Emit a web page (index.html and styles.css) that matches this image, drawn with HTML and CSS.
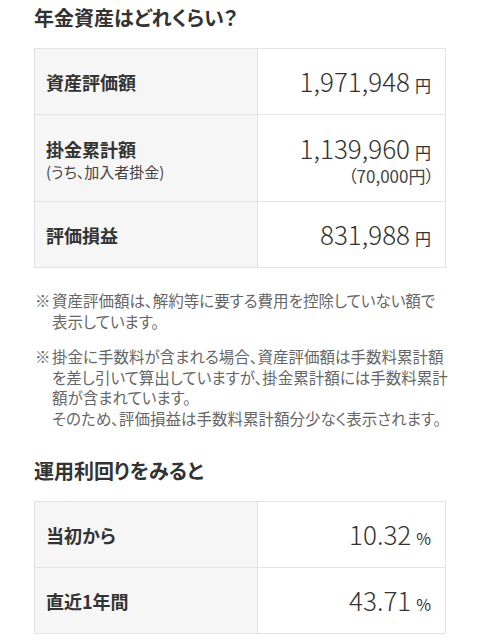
FILE: index.html
```html
<!doctype html>
<html lang="ja">
<head>
    <meta charset="UTF-8">
    <title>年金資産</title>
    <link rel="stylesheet" href="styles.css">
</head>
<body>
    <div class="page">
        <h2 class="section-title">年金資産はどれくらい？</h2>
        <div class="info-table">
            <div class="info-row">
                <div class="info-label">資産評価額</div>
                <div class="info-value">
                    <div class="amount"><span class="num">1,971,948</span><span class="unit">円</span></div>
                </div>
            </div>
            <div class="info-row info-row-tall">
                <div class="info-label">
                    掛金累計額
                    <span class="sub-label">(うち、加入者掛金)</span>
                </div>
                <div class="info-value">
                    <div class="amount"><span class="num">1,139,960</span><span class="unit">円</span></div>
                    <div class="sub-amount">（70,000円）</div>
                </div>
            </div>
            <div class="info-row">
                <div class="info-label">評価損益</div>
                <div class="info-value">
                    <div class="amount"><span class="num">831,988</span><span class="unit">円</span></div>
                </div>
            </div>
        </div>

        <ul class="notes">
            <li>資産評価額は、解約等に要する費用を控除していない額で<br>表示しています。</li>
            <li>掛金に手数料が含まれる場合、資産評価額は手数料累計額<br>を差し引いて算出していますが、掛金累計額には手数料累計<br>額が含まれています。<br>そのため、評価損益は手数料累計額分少なく表示されます。</li>
        </ul>

        <h2 class="section-title">運用利回りをみると</h2>
        <div class="info-table">
            <div class="info-row">
                <div class="info-label">当初から</div>
                <div class="info-value">
                    <div class="amount"><span class="num">10.32</span><span class="unit">%</span></div>
                </div>
            </div>
            <div class="info-row">
                <div class="info-label">直近1年間</div>
                <div class="info-value">
                    <div class="amount"><span class="num">43.71</span><span class="unit">%</span></div>
                </div>
            </div>
        </div>
    </div>
</body>
</html>
```

FILE: styles.css
```css
body {
    margin: 0;
    background: #fff;
    color: #333;
    font-family: "Noto Sans CJK JP", "Noto Sans", sans-serif;
    font-feature-settings: "palt";
}
.page {
    padding: 0 34px;
}
.section-title {
    margin: 0;
    padding-top: 6px;
    margin-bottom: 18px;
    font-size: 20px;
    line-height: 24px;
    font-weight: bold;
    color: #333;
}
.notes + .section-title {
    margin-top: 31px;
    padding-top: 0;
}
.info-table {
    border: 1px solid #e3e3e3;
}
.info-row {
    display: grid;
    grid-template-columns: 223px 1fr;
    min-height: 65px;
}
.info-row + .info-row {
    border-top: 1px solid #e3e3e3;
}
.info-row-tall {
    min-height: 86px;
}
.info-label {
    background: #f6f6f6;
    border-right: 1px solid #e3e3e3;
    padding: 0 11px;
    display: flex;
    flex-direction: column;
    justify-content: center;
    font-size: 18px;
    font-weight: bold;
    line-height: 22px;
}
.info-row-tall .info-label {
    padding-top: 5px;
}
.sub-label {
    font-size: 15px;
    font-weight: normal;
    line-height: 24px;
    color: #444;
}
.info-value {
    display: flex;
    flex-direction: column;
    justify-content: center;
    align-items: flex-end;
    padding-right: 14px;
}
.info-row-tall .info-value {
    padding-top: 5px;
}
.amount {
    display: flex;
    align-items: baseline;
}
.num {
    font-size: 26px;
    font-weight: 300;
    line-height: 30px;
}
.unit {
    font-size: 16px;
    margin-left: 5px;
}
.sub-amount {
    font-size: 17px;
    line-height: 24px;
    color: #444;
    margin-right: -3px;
}
.notes {
    list-style: none;
    margin: 22px -10px 0 0;
    padding: 0 0 0 18px;
    font-size: 15.5px;
    line-height: 20.5px;
    color: #666;
}
.notes li {
    text-indent: -17px;
}
.notes li::before {
    content: "※";
    display: inline-block;
    width: 17px;
    text-indent: 0;
}
.notes li + li {
    margin-top: 15px;
}
```
